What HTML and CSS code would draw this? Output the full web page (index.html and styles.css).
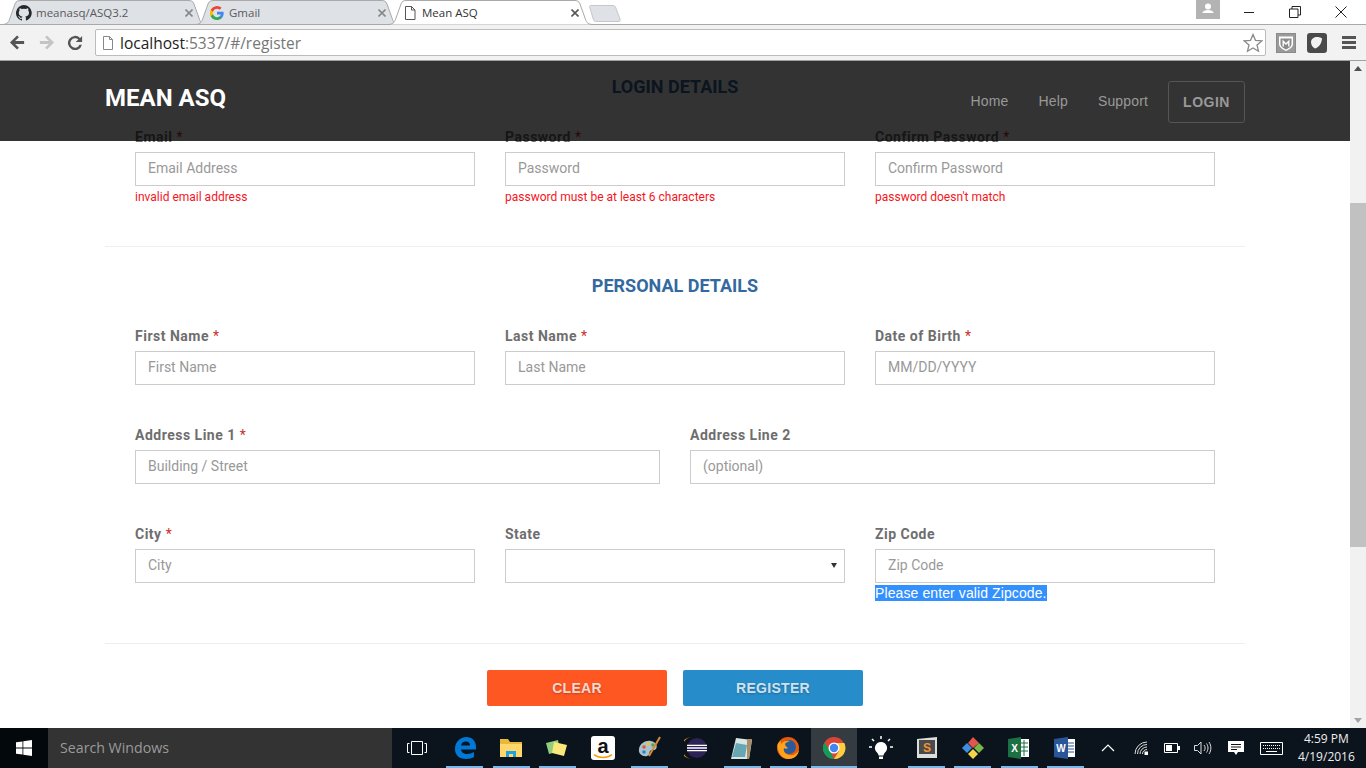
FILE: index.html
```html
<!DOCTYPE html>
<html lang="en">
<head>
<meta charset="utf-8">
<title>Mean ASQ</title>
<link rel="stylesheet" href="styles.css">
</head>
<body>
<div class="tabstrip">
  <div class="tab">
    <svg class="tab-shape" viewBox="0 0 205 25" preserveAspectRatio="none"><path d="M0 24.5C6 24.5 7 21 8 18L13 4C14 1 16 .5 19 .5H186C189 .5 191 1 192 4L197 18C198 21 199 24.5 205 24.5Z"/></svg>
    <svg class="favicon" viewBox="0 0 16 16"><path fill="#24292e" d="M8 0a8 8 0 0 0-2.5 15.6c.4.1.5-.2.5-.4v-1.4c-2.2.5-2.7-1-2.7-1-.4-.9-.9-1.200-.9-1.200-.7-.5.100-.5.100-.5.8.100 1.200.8 1.200.8.7 1.200 1.900.9 2.300.7.100-.5.300-.9.500-1.100-1.800-.2-3.700-.9-3.700-4 0-.9.300-1.600.8-2.100-.1-.2-.4-1 .100-2.100 0 0 .7-.2 2.200.8a7.500 7.500 0 0 1 4 0c1.500-1 2.200-.8 2.200-.8.400 1.100.200 1.900.100 2.100.5.600.8 1.300.8 2.100 0 3.100-1.900 3.700-3.700 3.900.3.300.6.800.6 1.500v2.200c0 .2.100.5.600.4A8 8 0 0 0 8 0Z"/></svg>
    <span class="tab-title">meanasq/ASQ3.2</span>
    <svg class="tab-close" viewBox="0 0 8 8"><path d="M.5.500l7 7M7.500.500l-7 7"/></svg>
  </div>
  <div class="tab">
    <svg class="tab-shape" viewBox="0 0 205 25" preserveAspectRatio="none"><path d="M0 24.5C6 24.5 7 21 8 18L13 4C14 1 16 .5 19 .5H186C189 .5 191 1 192 4L197 18C198 21 199 24.5 205 24.5Z"/></svg>
    <svg class="favicon favicon-g" viewBox="0 0 16 16"><path fill="#4285f4" d="M15.600 8.200c0-.6-.1-1.100-.2-1.600H8v3h4.300c-.2 1-.8 1.800-1.600 2.400v2h2.600c1.500-1.400 2.300-3.400 2.300-5.800Z"/><path fill="#34a853" d="M8 16c2.200 0 4-.7 5.300-2l-2.600-2c-.7.500-1.600.8-2.700.8-2.100 0-3.900-1.400-4.500-3.300H.8v2.100A8 8 0 0 0 8 16Z"/><path fill="#fbbc05" d="M3.500 9.500a4.800 4.800 0 0 1 0-3V4.400H.8a8 8 0 0 0 0 7.200Z"/><path fill="#ea4335" d="M8 3.200c1.200 0 2.200.4 3 1.200l2.300-2.300A8 8 0 0 0 .8 4.400l2.700 2.100C4.100 4.600 5.900 3.200 8 3.200Z"/></svg>
    <span class="tab-title">Gmail</span>
    <svg class="tab-close" viewBox="0 0 8 8"><path d="M.5.500l7 7M7.500.500l-7 7"/></svg>
  </div>
  <div class="tab tab-active">
    <svg class="tab-shape" viewBox="0 0 205 25" preserveAspectRatio="none"><path d="M0 24.500C6 24.500 7 21 8 18L13 4C14 1 16 .5 19 .5H186C189 .5 191 1 192 4L197 18C198 21 199 24.500 205 24.500"/></svg>
    <svg class="favicon" viewBox="0 0 16 16"><path fill="#fff" stroke="#555" d="M3.500 1.500h6l3.500 3.500v9.500h-9.500Z"/><path fill="none" stroke="#555" d="M9.500 1.500v3.500h3.500"/></svg>
    <span class="tab-title">Mean ASQ</span>
    <svg class="tab-close" viewBox="0 0 8 8"><path d="M.5.500l7 7M7.500.500l-7 7"/></svg>
  </div>
  <svg class="newtab" viewBox="0 0 32 17"><path fill="#dee1e6" stroke="#c4c7cc" d="M.5 1.500C.5 1 1 .5 2 .5H24C25 .5 26 1 26.500 2L31 14C31.500 15.500 31 16.500 30 16.500H7C6 16.500 5 16 4.500 15Z"/></svg>
  <div class="winbar">
    <span class="profile"><svg viewBox="0 0 24 19" class="profile-icon"><circle cx="12" cy="6.500" r="3" fill="#fff"/><path fill="#fff" d="M6.500 13c0-2 3-3 5.500-3s5.500 1 5.500 3Z"/></svg></span>
    <span class="winbtn"><svg viewBox="0 0 12 12" class="wico"><path d="M1 6.500h10"/></svg></span>
    <span class="winbtn"><svg viewBox="0 0 12 12" class="wico"><path d="M.5 3h8.500v8.500H.5ZM3 3V.5h8.500V9H9"/></svg></span>
    <span class="winbtn"><svg viewBox="0 0 12 12" class="wico"><path d="M.5.5l11 11M11.500.5l-11 11"/></svg></span>
  </div>
</div>

<div class="toolbar">
  <svg class="tool-ico" viewBox="0 0 18 18"><path fill="#555" d="M16 7.500H6.500L10.500 3.500 8.500 1.500 1 9l7.500 7.500 2-2-4-4H16Z"/></svg>
  <svg class="tool-ico tool-fwd" viewBox="0 0 18 18"><path fill="#c4c4c4" d="M2 7.500h9.500L7.500 3.500l2-2L17 9l-7.500 7.500-2-2 4-4H2Z"/></svg>
  <svg class="tool-ico tool-rel" viewBox="0 0 18 18"><path fill="#555" d="M14.700 3.300A8 8 0 1 0 16.800 11h-2.800a5.300 5.300 0 1 1-1.200-5.800L9.800 8H17V1Z"/></svg>
  <div class="omnibox">
    <svg class="omni-doc" viewBox="0 0 14 16"><path fill="#fff" stroke="#888" d="M2.500 1.500h6l3 3v10h-9Z"/><path fill="none" stroke="#888" d="M8.500 1.500v3h3"/></svg>
    <span class="url-host">localhost</span><span class="url-rest">:5337/#/register</span>
    <svg class="omni-star" viewBox="0 0 20 20"><path fill="#fff" stroke="#8a8a8a" stroke-width="1.300" d="M10 1.500l2.500 5.800 6.300.6-4.800 4.100 1.500 6.200L10 15l-5.500 3.200L6 12 1.200 7.900l6.300-.6Z"/></svg>
  </div>
  <svg class="ext-ico ext-first" viewBox="0 0 20 20"><rect x=".5" y=".5" width="19" height="19" fill="#9a9a9a" stroke="#8a8a8a"/><path fill="#fff" d="M3 3.500h14v7.500c0 3-3 5-7 7-4-2-7-4-7-7Z"/><path fill="#8a8a8a" d="M4.500 5.500h11V11c0 2-2 4-5.500 5.500C6.500 15 4.500 13 4.500 11Z"/><path fill="#fff" d="M6.500 6.500l3.500 3.500 3.500-3.500v7h-1.400V10L10 12 7.900 10v3.500H6.500Z"/></svg>
  <svg class="ext-ico" viewBox="0 0 20 20"><rect width="20" height="20" rx="3" fill="#4a4a4a"/><path fill="#f2f2f2" d="M4 9c0-3 3-5 6-5 2 0 4 .5 5 1.500 0 4-3 9-7 10-2-1-4-3-4-6.500Z"/></svg>
  <svg class="menu-ico" viewBox="0 0 14 13"><path fill="#555" d="M0 0h14v3H0ZM0 5h14v3H0ZM0 10h14v3H0Z"/></svg>
</div>

<div class="viewport">
  <main class="page">
    <form class="form">
      <h2 class="sec-title sec-first">LOGIN DETAILS</h2>
      <div class="cols3 login-row">
        <div class="field"><label class="lbl">Email <i>*</i></label><input class="inp" placeholder="Email Address"><p class="err">invalid email address</p></div>
        <div class="field"><label class="lbl">Password <i>*</i></label><input class="inp" placeholder="Password"><p class="err">password must be at least 6 characters</p></div>
        <div class="field"><label class="lbl">Confirm Password <i>*</i></label><input class="inp" placeholder="Confirm Password"><p class="err">password doesn't match</p></div>
      </div>
      <hr class="rule rule-a">
      <h2 class="sec-title">PERSONAL DETAILS</h2>
      <div class="cols3 row">
        <div class="field"><label class="lbl">First Name <i>*</i></label><input class="inp" placeholder="First Name"></div>
        <div class="field"><label class="lbl">Last Name <i>*</i></label><input class="inp" placeholder="Last Name"></div>
        <div class="field"><label class="lbl">Date of Birth <i>*</i></label><input class="inp" placeholder="MM/DD/YYYY"></div>
      </div>
      <div class="cols2 row">
        <div class="field"><label class="lbl">Address Line 1 <i>*</i></label><input class="inp" placeholder="Building / Street"></div>
        <div class="field"><label class="lbl">Address Line 2</label><input class="inp" placeholder="(optional)"></div>
      </div>
      <div class="cols3 row-last">
        <div class="field"><label class="lbl">City <i>*</i></label><input class="inp" placeholder="City"></div>
        <div class="field"><label class="lbl">State</label><span class="sel-wrap"><select class="inp sel"><option></option></select></span></div>
        <div class="field"><label class="lbl">Zip Code</label><input class="inp" placeholder="Zip Code"><p class="zip-err"><span class="selected">Please enter valid Zipcode.</span></p></div>
      </div>
      <hr class="rule rule-b">
      <div class="actions">
        <button type="button" class="btn btn-clear">CLEAR</button>
        <button type="button" class="btn btn-reg">REGISTER</button>
      </div>
    </form>
    <nav class="nav">
      <a class="brand">MEAN ASQ</a>
      <div class="nav-links">
        <a class="nav-link">Home</a>
        <a class="nav-link">Help</a>
        <a class="nav-link">Support</a>
        <a class="nav-login">LOGIN</a>
      </div>
    </nav>
  </main>
  <div class="scrollbar">
    <span class="sb-up"></span>
    <div class="sb-track"><div class="sb-thumb"></div></div>
    <span class="sb-down"></span>
  </div>
</div>

<footer class="taskbar">
  <span class="start"><svg viewBox="0 0 16 16" class="start-ico"><path fill="#fff" d="M0 2.300 6.500 1.400V7.600H0ZM7.300 1.300 16 0V7.600H7.300ZM0 8.400H6.500V14.600L0 13.700ZM7.300 8.400H16V16L7.300 14.700Z"/></svg></span>
  <span class="search">Search Windows</span>
  <div class="task-icons">
    <span class="tk tk-view"><svg viewBox="0 0 20 14" class="ico20"><path fill="none" stroke="#fff" d="M4.500 .5h11v13h-11ZM2.500 2.500H.5v9h2M17.500 2.500h2v9h-2"/></svg></span>
    <span class="tk on"><svg viewBox="0 0 24 24" class="ico24"><path fill="#0078d7" d="M2 13C2 6 7 1 13.500 1 19 1 23 5 23 11v2.500H8c.3 3 3 4.500 6 4.500 3 0 5-.7 7-2v5c-2 1.200-5 2-8 2C6 23 2 19 2 13ZM8 9.500h9C17 7 15.500 5.500 12.800 5.500 10.300 5.500 8.500 7 8 9.500Z"/></svg></span>
    <span class="tk on"><svg viewBox="0 0 24 24" class="ico24"><path fill="#e8b93b" d="M1 3h8l2 3h12v5H1Z"/><path fill="#ffd76a" d="M1 8h22v13H1Z"/><path fill="#1fa3e0" d="M7 15h10v6h-3v-3h-4v3H7Z"/></svg></span>
    <span class="tk on"><svg viewBox="0 0 24 24" class="ico24"><path fill="#8fcf7e" d="M1 7l12-3 2 11-11 3Z"/><path fill="#fbe77a" d="M9 6l13 3-3 11-12-3Z"/></svg></span>
    <span class="tk"><svg viewBox="0 0 24 24" class="ico24"><rect width="24" height="24" rx="3" fill="#fff"/><text x="12" y="16.500" class="amz">a</text><path fill="none" stroke="#f90" stroke-width="1.500" d="M3 18.500c5 4 13 4 18 0"/></svg></span>
    <span class="tk on"><svg viewBox="0 0 24 24" class="ico24"><path fill="#a9c4cf" d="M1 13C2 7 8 4 13 5c5 1 7 5 5 8-2 2-4 0-6 2-1 2 0 4-3 5C5 21 0 18 1 13Z"/><circle cx="6" cy="11" r="1.800" fill="#e2543c"/><circle cx="10" cy="8" r="1.800" fill="#f2c230"/><circle cx="15" cy="9" r="1.800" fill="#4aa84f"/><circle cx="6" cy="16" r="1.800" fill="#2f7fd0"/><path fill="none" stroke="#d9893a" stroke-width="2" d="M22 1 11 20"/></svg></span>
    <span class="tk"><svg viewBox="0 0 24 24" class="ico24"><path fill="#f7941e" d="M9 1a11 11 0 0 0 0 22 13 11 0 0 1 0-22Z"/><circle cx="13" cy="12" r="10" fill="#2c2255"/><path fill="#fff" d="M3 8.700h20v1.300H3ZM3 11.300h20v1.400H3ZM3 14h20v1.300H3Z"/></svg></span>
    <span class="tk on"><svg viewBox="0 0 24 24" class="ico24"><path fill="#d8e6e8" d="M6 2l16 2-3 19H1Z"/><path fill="#68a6b4" d="M6 7l11 2-2 12H2Z"/><path fill="#a98d66" d="M17 3h5l-3 20h-2Z"/></svg></span>
    <span class="tk on"><svg viewBox="0 0 24 24" class="ico24"><circle cx="12" cy="12" r="11" fill="#e8590c"/><circle cx="13" cy="11" r="7" fill="#2a5a9e"/><path fill="#ffa31a" d="M1.500 9c0 8 5 14 11 14 6 0 10-4 10.500-9-2 4-6 6-10 5-4-1-6-4-5-7 1 1 3 1 4 0-1-1-3-2-3-4 1-2 3-2 5-3-3-1-7 0-9 3-.5-1-.5-2 0-3C3.500 5.500 2 7 1.500 9Z"/></svg></span>
    <span class="tk on tk-active"><svg viewBox="0 0 24 24" class="ico24"><circle cx="12" cy="12" r="11" fill="#db4437"/><path fill="#0f9d58" d="M2.500 6.500 8 15l4 8c-6 0-11-5-11-11 0-2 .5-3.800 1.500-5.500Z"/><path fill="#ffcd40" d="M12 7h10.300A11 11 0 0 1 12 23l5-8Z"/><circle cx="12" cy="12" r="5.500" fill="#fff"/><circle cx="12" cy="12" r="4.200" fill="#4285f4"/></svg></span>
    <span class="tk"><svg viewBox="0 0 24 24" class="ico24"><path fill="#fff" d="M12 6a6 6 0 0 1 4 10.500c-1 1-1.500 2-1.500 3h-5c0-1-.5-2-1.500-3A6 6 0 0 1 12 6ZM10 20.500h4V23h-4Z"/><path stroke="#fff" stroke-width="1.500" d="M12 0v3M3 3l2 2M21 3l-2 2M0 11h3M21 11h3"/></svg></span>
    <span class="tk on"><svg viewBox="0 0 24 24" class="ico24"><path fill="#ddd" d="M2 3l20-2v21H2Z"/><path fill="#4a4a4a" d="M4 4h16v14H4Z"/><text x="12" y="15.500" class="subl">S</text></svg></span>
    <span class="tk on"><svg viewBox="0 0 24 24" class="ico24"><path fill="#e2574c" d="M12 1l6 6-6 5-5-5Z"/><path fill="#3f8fe0" d="M6 7l5 5-5 5-5-5Z"/><path fill="#7ab648" d="M18 7l5 5-5 5-5-5Z"/><path fill="#f5d44a" d="M12 13l5 5-5 5-5-5Z"/></svg></span>
    <span class="tk on"><svg viewBox="0 0 24 24" class="ico24"><path fill="#fff" d="M12 3h10v18H12Z"/><path stroke="#1d7044" stroke-width="1" d="M13 7h8M13 11h8M13 15h8M17 4v16"/><path fill="#1d7044" d="M1 3l13-2v22L1 21Z"/><text x="7.500" y="16" class="xl">X</text></svg></span>
    <span class="tk on"><svg viewBox="0 0 24 24" class="ico24"><path fill="#fff" d="M12 3h10v18H12Z"/><path stroke="#2a5699" stroke-width="1.200" d="M14 7h7M14 10h7M14 13h7M14 16h7"/><path fill="#2a5699" d="M1 3l14-2v22L1 21Z"/><text x="8" y="16" class="xl">W</text></svg></span>
  </div>
  <div class="tray">
    <svg class="tray-ico tray-up" viewBox="0 0 14 8"><path fill="none" stroke="#fff" stroke-width="1.200" d="M1 7l6-6 6 6"/></svg>
    <svg class="tray-ico tray-net" viewBox="0 0 14 14"><path fill="none" stroke="#ddd" d="M1 13A12 12 0 0 1 13 1M3.500 13A9.500 9.500 0 0 1 13 3.500M6 13a7 7 0 0 1 7-7M8.500 13a4.500 4.500 0 0 1 4.500-4.500"/><path fill="#fff" d="M10.500 10.500H14V14h-3.500Z"/></svg>
    <svg class="tray-ico tray-bat" viewBox="0 0 16 10"><path fill="none" stroke="#fff" d="M.5 .5h13v9H.5Z"/><path fill="#fff" d="M2 2h6v6H2ZM14 3h2v4h-2Z"/></svg>
    <svg class="tray-ico tray-vol" viewBox="0 0 18 14"><path fill="none" stroke="#ddd" d="M.5 4.500h3l3.500-3.500v12l-3.500-3.500h-3ZM10 4c1.500 2 1.500 4 0 6M12.500 2.500c2 3 2 6 0 9M15 1c2.500 4 2.500 8 0 12"/></svg>
    <svg class="tray-ico tray-note" viewBox="0 0 16 15"><path fill="#fff" d="M0 0h16v11H10l-2 3-2-3H0Z"/><path stroke="#111" d="M3 3.500h10M3 6h10M3 8.500h6"/></svg>
    <svg class="tray-ico tray-kb" viewBox="0 0 23 13"><path fill="none" stroke="#fff" d="M.5 .5h22v12H.5Z"/><path stroke="#fff" stroke-dasharray="1 1" d="M3 3.500h17M3 6.500h17"/><path stroke="#fff" d="M6 9.500h11"/></svg>
    <div class="clock"><span>4:59 PM</span><span>4/19/2016</span></div>
  </div>
</footer>
</body>
</html>
```
FILE: styles.css
```css
* { box-sizing: border-box; }
html, body { margin: 0; height: 100%; }
body {
  width: 1366px;
  height: 768px;
  overflow: hidden;
  display: flex;
  flex-direction: column;
  background: #fff;
  font-family: Roboto, sans-serif;
}

/* browser tabs */
.tabstrip {
  height: 25px;
  flex: none;
  display: flex;
  padding-left: 2px;
  background: #fff;
  border-bottom: 1px solid #a9a9a9;
}
.tab {
  position: relative;
  width: 205px;
  height: 25px;
  margin-right: -12px;
  padding: 5px 0 0 14px;
  display: flex;
  font: 11.5px/16px "Open Sans", "Noto Sans", sans-serif;
  color: #5a5a5a;
}
.tab-shape { position: absolute; left: 0; top: 0; width: 205px; height: 25px; }
.tab-shape path { fill: #dee1e6; stroke: #a9a9a9; }
.tab-active .tab-shape path { fill: #fff; }
.tab-active { color: #333; }
.favicon { position: relative; width: 16px; height: 16px; flex: none; }
.favicon-g { width: 14px; height: 14px; margin: 1px 1px 0 1px; }
.tab-title { position: relative; margin-left: 4px; flex: 1; }
.tab-close { position: relative; width: 8px; height: 8px; margin: 4px 14px 0 0; flex: none; }
.tab-close path { fill: none; stroke: #888; stroke-width: 1.600; }
.tab-active .tab-close path { stroke: #555; }
.newtab { width: 32px; height: 17px; margin: 5px 0 0 8px; flex: none; }
.winbar { margin-left: auto; display: flex; height: 19px; padding-right: 2px; }
.profile { width: 24px; height: 19px; background: #b3b3b3; margin-right: 6px; }
.profile-icon { display: block; width: 24px; height: 19px; }
.winbtn { width: 46px; height: 24px; display: flex; align-items: center; justify-content: center; }
.wico { width: 12px; height: 12px; }
.wico path { fill: none; stroke: #222; stroke-width: 1; }

/* browser toolbar */
.toolbar {
  height: 36px;
  flex: none;
  display: flex;
  align-items: center;
  padding-left: 9px;
  background: #f2f2f2;
  border-bottom: 1px solid #a0a0a0;
}
.tool-ico { width: 17px; height: 17px; flex: none; }
.tool-fwd { margin-left: 12px; }
.tool-rel { margin-left: 12px; width: 16px; height: 16px; }
.omnibox {
  width: 1171px;
  height: 27px;
  margin-left: 12px;
  padding-left: 5px;
  display: flex;
  align-items: center;
  background: #fff;
  border: 1px solid #bcbcbc;
  border-radius: 2px;
  font: 15.5px/20px "Open Sans", "Noto Sans", sans-serif;
}
.omni-doc { width: 14px; height: 16px; margin-right: 5px; flex: none; }
.url-host { color: #222; }
.url-rest { color: #777; }
.omni-star { width: 20px; height: 20px; margin-left: auto; margin-right: 2px; }
.ext-ico { width: 20px; height: 20px; flex: none; margin-left: 11px; }
.ext-first { margin-left: 10px; }
.menu-ico { width: 14px; height: 13px; margin-left: 15px; flex: none; }

/* page viewport */
.viewport { flex: 1; min-height: 0; display: flex; }
.page { position: relative; flex: 1; min-width: 0; overflow: hidden; background: #fff; }
.form { width: 1140px; margin: 0 auto; padding-top: 16px; }
.sec-title {
  margin: 0;
  height: 20px;
  font-size: 18px;
  line-height: 20px;
  font-weight: 700;
  text-align: center;
  color: #33699f;
}
.cols3 { display: grid; grid-template-columns: repeat(3, 340px); gap: 30px; padding: 0 30px; }
.cols2 { display: grid; grid-template-columns: repeat(2, 525px); gap: 30px; padding: 0 30px; }
.login-row { margin-top: 30px; }
.sec-title + .row { margin-top: 30px; }
.row { margin-bottom: 40px; }
.field { display: flex; flex-direction: column; min-width: 0; }
.lbl {
  height: 20px;
  margin-bottom: 5px;
  font-size: 14px;
  line-height: 20px;
  font-weight: 700;
  letter-spacing: .5px;
  color: #6e6e6e;
}
.lbl i { font-style: normal; font-weight: 400; color: #c9302c; }
.inp {
  display: block;
  width: 100%;
  height: 34px;
  padding: 0 12px 2px;
  font: 14px Roboto, sans-serif;
  color: #555;
  background: #fff;
  border: 1px solid #ccc;
  border-radius: 0;
}
.inp::placeholder { color: #999; opacity: 1; }
.sel { appearance: none; }
.sel-wrap { position: relative; display: block; }
.sel-wrap::after {
  content: "";
  position: absolute;
  right: 8px;
  top: 14px;
  border: 3px solid transparent;
  border-top: 5px solid #333;
  border-bottom: 0;
}
.err {
  margin: 3px 0 0;
  height: 16px;
  font-size: 12px;
  line-height: 16px;
  color: #f4151c;
}
.zip-err {
  margin: 2px 0 0;
  height: 16px;
  font: 14px/16px "Liberation Sans", Arial, sans-serif;
  letter-spacing: .1px;
}
.selected { display: inline-block; background: #3390ff; color: #fff; }
.rule { margin: 0; border: 0; height: 1px; background: #eee; }
.rule-a { margin: 41px 0 29px; }
.rule-b { margin: 42px 0 26px; }
.actions { display: flex; justify-content: center; gap: 16px; }
.btn {
  width: 180px;
  height: 36px;
  border: 0;
  border-radius: 2px;
  font: 700 14px "Liberation Sans", Arial, sans-serif;
  letter-spacing: .3px;
  color: rgba(255, 255, 255, .8);
  text-shadow: 0 1px 2px rgba(0, 0, 0, .25);
}
.btn-clear { background: #ff5722; }
.btn-reg { background: #268dca; }

/* fixed site header, over the form */
.nav {
  position: absolute;
  left: 0;
  right: 0;
  top: 0;
  height: 80px;
  padding: 0 105px;
  display: flex;
  justify-content: space-between;
  background: rgba(0, 0, 0, .8);
}
.brand { margin-top: 22px; font-size: 24px; line-height: 30px; font-weight: 700; color: #fff; }
.nav-links { display: flex; align-items: flex-start; padding-top: 20px; }
.nav-link {
  margin: 10px 30px 0 0;
  font: 14px/20px "Liberation Sans", Arial, sans-serif;
  letter-spacing: .15px;
  color: #999;
}
.nav-link:nth-child(3) { margin-right: 20px; }
.nav-login {
  width: 77px;
  height: 42px;
  border: 1px solid #555;
  border-radius: 3px;
  font: 700 14px/40px "Liberation Sans", Arial, sans-serif;
  letter-spacing: .5px;
  text-align: center;
  color: #999;
}

/* scrollbar */
.scrollbar { width: 16px; flex: none; display: flex; flex-direction: column; background: #f1f1f1; }
.sb-up, .sb-down { height: 16px; flex: none; position: relative; }
.sb-up::after, .sb-down::after {
  content: "";
  position: absolute;
  left: 4px;
  top: 5px;
  border: 4px solid transparent;
  border-top: 0;
  border-bottom: 5px solid #505050;
}
.sb-down::after { border-bottom: 0; border-top: 5px solid #a3a3a3; top: 6px; }
.sb-track { flex: 1; padding-top: 126px; }
.sb-thumb { height: 344px; background: #c1c1c1; }

/* windows taskbar */
.taskbar {
  height: 40px;
  flex: none;
  display: flex;
  align-items: stretch;
  background: #0b141c;
  color: #fff;
}
.start { width: 48px; flex: none; display: flex; align-items: center; justify-content: center; background: #03080d; }
.start-ico { width: 16px; height: 16px; }
.search {
  width: 344px;
  flex: none;
  padding-left: 12px;
  font: 14.2px/40px "Open Sans", "Noto Sans", sans-serif;
  color: #9a9a9a;
  background: #333;
}
.task-icons { display: flex; padding-left: 1px; }
.tk {
  position: relative;
  width: 46.2px;
  flex: none;
  display: flex;
  align-items: center;
  justify-content: center;
}
.tk-view { width: 48.8px; }
.on::after {
  content: "";
  position: absolute;
  left: 4.6px;
  right: 4.6px;
  bottom: 0;
  height: 2px;
  background: #76b9ed;
}
.tk-active { background: #343b41; }
.tk-active::after { left: 0; right: 0; }
.ico20 { width: 20px; height: 14px; }
.ico24 { width: 24px; height: 24px; }
.amz { font: 700 20px "Liberation Sans", Arial, sans-serif; fill: #111; text-anchor: middle; }
.subl { font: 700 12px "Liberation Sans", Arial, sans-serif; fill: #f59331; text-anchor: middle; }
.xl { font: 700 10px "Liberation Sans", Arial, sans-serif; fill: #fff; text-anchor: middle; }
.tray { flex: 1; display: flex; align-items: center; padding-left: 13px; min-width: 0; }
.tray-ico { flex: none; }
.tray-up { width: 14px; height: 8px; }
.tray-net { width: 14px; height: 14px; margin-left: 19px; }
.tray-bat { width: 16px; height: 10px; margin-left: 16px; }
.tray-vol { width: 18px; height: 14px; margin-left: 14px; }
.tray-note { width: 16px; height: 15px; margin-left: 16px; }
.tray-kb { width: 23px; height: 13px; margin-left: 16px; }
.clock {
  width: 70px;
  margin-left: 8px;
  display: flex;
  flex-direction: column;
  align-items: center;
  font: 12px/18px "Open Sans", "Noto Sans", sans-serif;
  color: #eee;
}
```
